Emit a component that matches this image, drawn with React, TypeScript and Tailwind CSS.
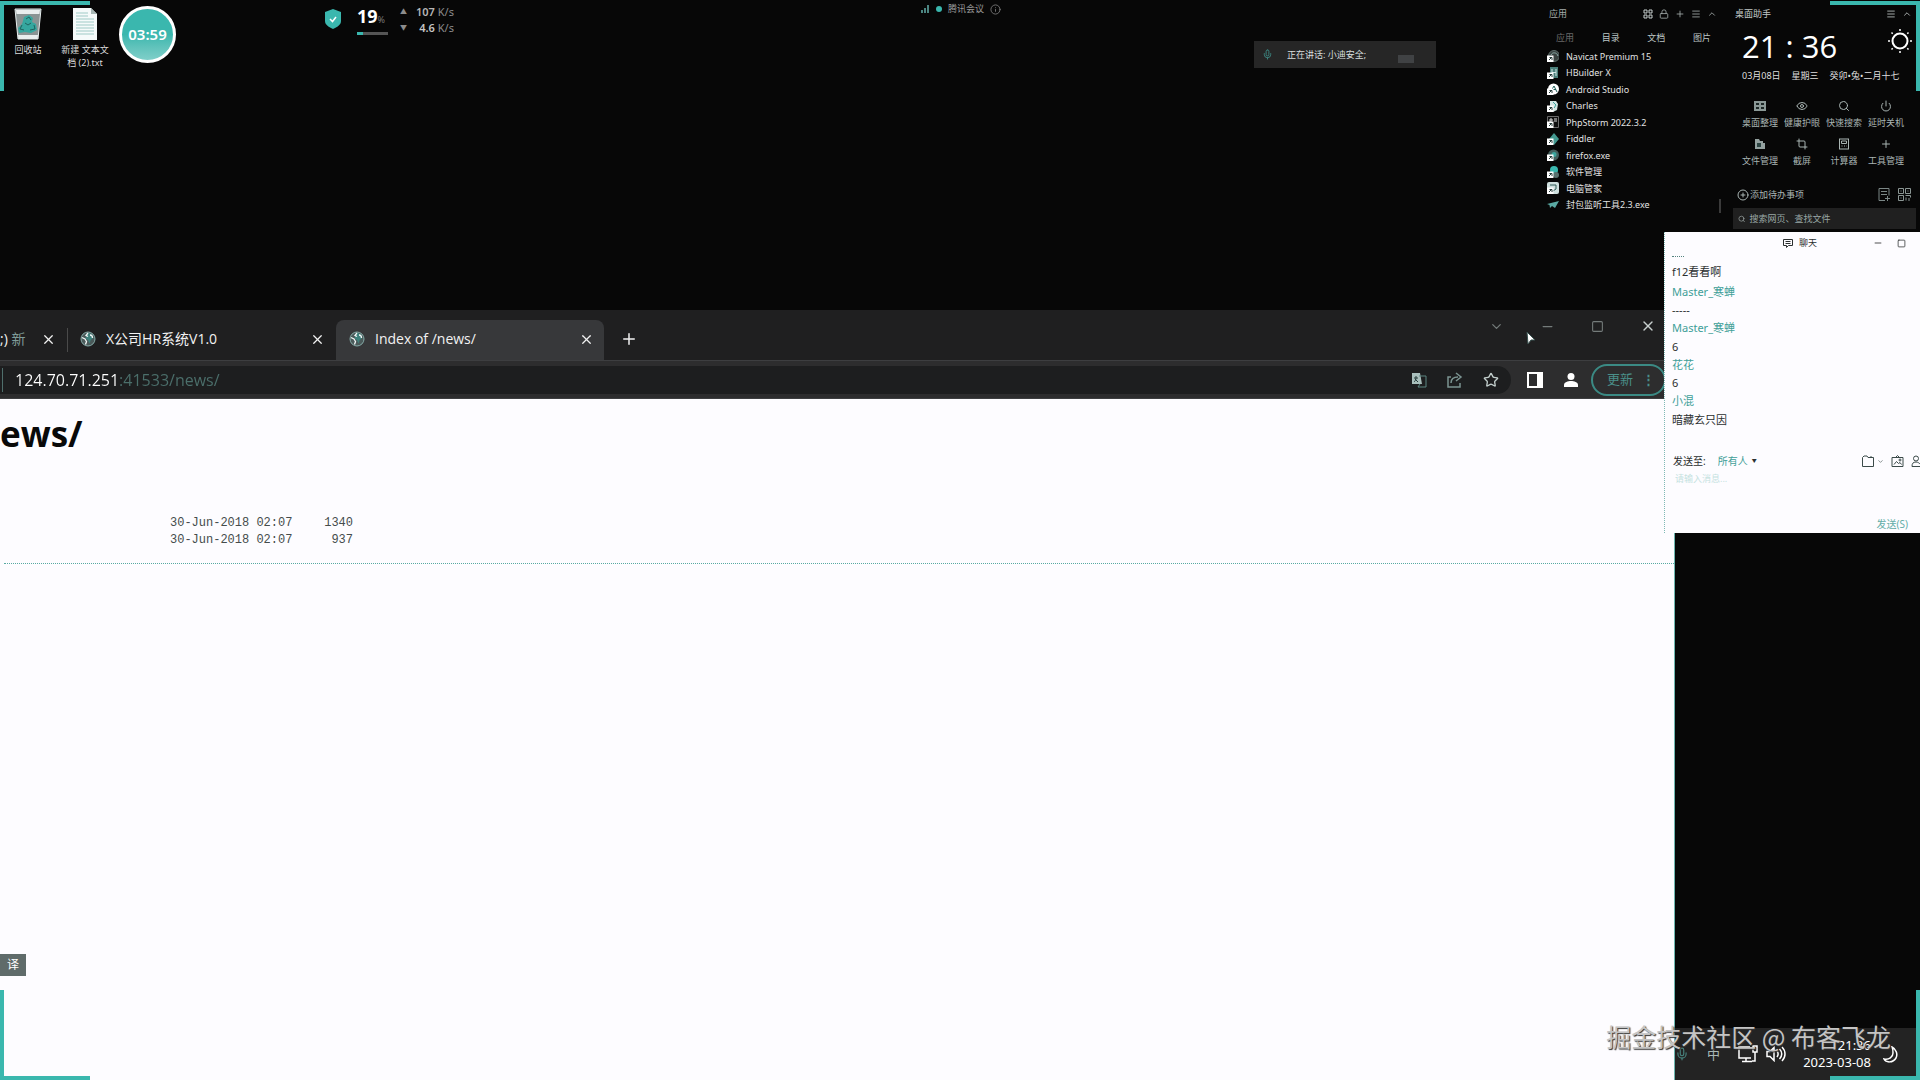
import React, { useState } from "react";
import {
  ChevronDown,
  ChevronUp,
  CirclePlus,
  Crop,
  Eye,
  Info,
  Lock,
  Menu,
  Mic,
  Minus,
  Plus,
  Power,
  Search,
  Square,
  Star,
  X,
} from "lucide-react";

interface AppItem {
  name: string;
  icon: React.ReactNode;
  shortcut: boolean;
}

const apps: AppItem[] = [
  {
    name: "Navicat Premium 15",
    icon: (
      <>
        <circle cx="7" cy="6" r="5.500" fill="#39413f" stroke="#5f6f6d" />
        <path d="M4 5c1-3 6-3 7 1" stroke="#8fb0ad" fill="none" />
      </>
    ),
    shortcut: true,
  },
  {
    name: "HBuilder X",
    icon: (
      <>
        <path d="M3 0h8v11H3z" fill="#4b7f7a" />
        <path d="M5 2v7M9 2v7M5 5.500h4" stroke="#cfe4e2" />
      </>
    ),
    shortcut: true,
  },
  {
    name: "Android Studio",
    icon: (
      <>
        <circle cx="6.500" cy="6" r="5.500" fill="#fff" />
        <path d="M4 8l3-5 3 6M5 6.500h4" stroke="#1f5d58" fill="none" />
      </>
    ),
    shortcut: true,
  },
  {
    name: "Charles",
    icon: (
      <>
        <path d="M3 1h6l2 3-1 6-4 2-3-4z" fill="#d4e6e4" />
        <path d="M6 2l3 3-2 3" stroke="#3aa49c" fill="none" />
      </>
    ),
    shortcut: true,
  },
  {
    name: "PhpStorm 2022.3.2",
    icon: (
      <>
        <path d="M.5 .5h11v11H.5z" fill="#111" stroke="#6a6a6a" />
        <path d="M3 6V3h2v2H3M7 3h3M7 5h3" stroke="#ddd" fill="none" />
      </>
    ),
    shortcut: true,
  },
  {
    name: "Fiddler",
    icon: <path d="M7 0l5 6-5 6-5-6z" fill="#449990" />,
    shortcut: true,
  },
  {
    name: "firefox.exe",
    icon: (
      <>
        <circle cx="6.500" cy="6" r="5.500" fill="#44605d" />
        <circle cx="7" cy="5.500" r="2.500" fill="#3aa49c" />
      </>
    ),
    shortcut: true,
  },
  {
    name: "软件管理",
    icon: (
      <>
        <circle cx="7" cy="4" r="4" fill="#3ab7ae" />
        <circle cx="9" cy="9" r="3" fill="#59716e" />
      </>
    ),
    shortcut: true,
  },
  {
    name: "电脑管家",
    icon: (
      <>
        <rect width="12" height="12" rx="2" fill="#cfe0de" />
        <path d="M3 3h6v4L6 9" stroke="#2f5b57" fill="none" />
      </>
    ),
    shortcut: true,
  },
  {
    name: "封包监听工具2.3.exe",
    icon: <path d="M0 5l12-3-4 7-3-2-2 2-.5-3z" fill="#5aa9a3" />,
    shortcut: false,
  },
];

const tools = [
  { name: "桌面整理", icon: <TidyIcon /> },
  { name: "健康护眼", icon: <Eye size={12} /> },
  { name: "快速搜索", icon: <Search size={12} /> },
  { name: "延时关机", icon: <Power size={12} /> },
  { name: "文件管理", icon: <FilesIcon /> },
  { name: "截屏", icon: <Crop size={12} /> },
  { name: "计算器", icon: <CalculatorIcon /> },
  { name: "工具管理", icon: <Plus size={12} /> },
];

const messages = [
  { text: "f12看看啊", name: false, height: "h-5" },
  { text: "Master_寒蝉", name: true, height: "h-5" },
  { text: "-----", name: false, height: "h-4" },
  { text: "Master_寒蝉", name: true, height: "h-5" },
  { text: "6", name: false, height: "h-[18px]" },
  { text: "花花", name: true, height: "h-[18px]" },
  { text: "6", name: false, height: "h-[18px]" },
  { text: "小混", name: true, height: "h-[18px]" },
  { text: "暗藏玄只因", name: false, height: "h-5" },
];

const files = [
  { date: "30-Jun-2018 02:07", size: "1340" },
  { date: "30-Jun-2018 02:07", size: "937" },
];

function TidyIcon() {
  return (
    <svg width="12" height="12" viewBox="0 0 12 12">
      <path d="M0 1h12v10H0z" fill="#8a9896" />
      <path d="M2 3h3v2H2zM7 3h3v2H7zM2 7h3v2H2zM7 7h3v2H7z" fill="#1b2625" />
    </svg>
  );
}

function FilesIcon() {
  return (
    <svg width="12" height="12" viewBox="0 0 12 12">
      <path d="M1 1h4l1 2h3v2h2v6H1z" fill="#93a19f" />
      <path d="M3 5h4v4H3z" fill="#2c4442" />
    </svg>
  );
}

function CalculatorIcon() {
  return (
    <svg width="12" height="12" viewBox="0 0 12 12" fill="none" stroke="currentColor">
      <rect x="1.5" y="1" width="9" height="10" />
      <path d="M3.5 3h5v2.5h-5zM3.5 8h1M6 8h1M8.5 8h0.5" />
    </svg>
  );
}

const GridIcon = () => (
  <svg width="10" height="10" viewBox="0 0 10 10" fill="none" stroke="#c8d0cf">
    <path d="M1 1h3v3H1zM6 1h3v3H6zM1 6h3v3H1zM6 6h3v3H6z" />
  </svg>
);

const QrIcon = () => (
  <svg width="13" height="13" viewBox="0 0 13 13" fill="none" stroke="#8b9694">
    <path d="M.5 .5h5v5h-5zM7.500 .5h5v5h-5zM.5 7.500h5v5h-5zM3 2.500v1M10 2.500v1M3 9.500v1M7.500 7.500h5v2M8 12.500v-3M11 10v3" />
  </svg>
);

const SunIcon = () => (
  <svg width="24" height="24" viewBox="0 0 24 24" fill="none" stroke="#fff">
    <circle cx="12" cy="12" r="7.500" strokeWidth="2" />
    <path
      d="M12 0v2M12 22v2M0 12h2M22 12h2M3.500 3.500l1.200 1.200M19.300 19.300l1.200 1.200M3.500 20.500l1.200-1.200M19.300 4.700l1.200-1.200"
      strokeWidth="1.500"
    />
  </svg>
);

const MoonIcon = () => (
  <svg width="15" height="17" viewBox="0 0 15 17" fill="none" stroke="#fff" strokeWidth="1.500">
    <path d="M9 1c4 2 6 7 4 11-3 5-10 5-12 1 5 1 9-2 9-6 0-2 0-4-1-6z" />
  </svg>
);

const GlobeIcon = () => (
  <svg width="18" height="18" viewBox="0 0 18 18" fill="none">
    <circle cx="9" cy="9" r="7" fill="#4b5a5a" stroke="#84aaa7" />
    <path d="M8 3.5c3-1.5 6 1 6.200 4.500l-2.500 2-1.200 3.500-1.500-3.500-2.500-1.500z" fill="#3d817c" />
    <path d="M3 7.500l3 1.500 1.500 2.500-1 3M9 3l-2 2.500 2 1M11 5c1.500 0 2.500 1.500 2.500 3" stroke="#f1f6f6" strokeWidth="1.300" />
  </svg>
);

const RecycleBinIcon = () => (
  <svg width="28" height="32" viewBox="0 0 28 32">
    <path d="M1 1h26l-3 30H4z" fill="#8a9494" stroke="#e6eeee" />
    <path d="M2 2h24l-.5 4H2.500zM4 27h20l-.4 4H4.400z" fill="#e9eeee" />
    <path d="M10 9l5-2 4 3-1 4 4 2 1 6-6 3-6-1-6 1-1-5 4-4 1-3z" fill="#35a79f" />
    <path d="M12 11l3-2 2 3M8 17l-2 4 4 1M20 17l1 4-5 1M11 15l3 2 3-2" stroke="#20625e" fill="none" />
  </svg>
);

const TextFileIcon = () => (
  <svg width="24" height="32" viewBox="0 0 24 32">
    <path d="M0 0h18l6 6v26H0z" fill="#f5fafa" />
    <path d="M18 0l6 6h-6z" fill="#a7b7b5" />
    <path
      d="M3 5h12M3 8h12M3 11h18M3 14h18M3 17h18M3 20h18M3 23h18M3 26h18"
      stroke="#9fcac6"
    />
  </svg>
);

const ShieldIcon = () => (
  <svg width="16" height="20" viewBox="0 0 16 20">
    <path d="M8 0l8 3v9c0 4-4 6-8 8-4-2-8-4-8-8V3z" fill="#3ab7ae" />
    <path d="M5 10l2.500 2.500L11 8" stroke="#fff" strokeWidth="1.500" fill="none" />
  </svg>
);

const Desktop = () => (
  <div className="absolute left-2 top-[6px] flex items-start text-[9px] leading-[13px] text-[#dcdcdc]">
    <button type="button" className="flex w-10 flex-col items-center gap-[3px] pt-[2px]">
      <RecycleBinIcon />
      <span>回收站</span>
    </button>
    <button type="button" className="ml-[10px] flex w-[54px] flex-col items-center gap-[3px] pt-[2px]">
      <TextFileIcon />
      <span>
        新建 文本文
        <br />档 (2).txt
      </span>
    </button>
    <div className="ml-[7px] flex h-[57px] w-[57px] items-center justify-center rounded-full border-[3px] border-white bg-linear-to-b from-[#3ab7ae] from-50% to-[#7fcfc9] text-[15px] font-semibold text-white">
      03:59
    </div>
  </div>
);

const NetworkMonitor = () => (
  <div className="absolute left-[325px] top-1 flex items-start text-[#8c8c8c]">
    <div className="pt-[5px]">
      <ShieldIcon />
    </div>
    <div className="ml-4 w-[31px]">
      <div className="flex items-baseline text-[18px] font-bold leading-6 text-white">
        19<span className="text-[9px] font-normal text-[#777]">%</span>
      </div>
      <div className="h-[3px] bg-[#555]">
        <div className="h-full w-[19%] bg-[#3ab7ae]" />
      </div>
    </div>
    <div className="ml-3 grid grid-cols-[8px_auto] gap-x-2 text-[11px] leading-4">
      <span className="text-[7px]">▲</span>
      <span className="text-right">
        <b className="font-semibold text-[#b5b5b5]">107</b> K/s
      </span>
      <span className="text-[7px]">▼</span>
      <span className="text-right">
        <b className="font-semibold text-[#c5c5c5]">4.6</b> K/s
      </span>
    </div>
  </div>
);

const MeetingBar = () => (
  <>
    <div className="absolute left-1/2 top-0 ml-[-39px] flex h-[18px] items-center gap-[6px] text-[9px] text-[#9a9a9a]">
      <svg width="9" height="8" viewBox="0 0 9 8" fill="#4b8581">
        <path d="M0 5h2v3H0zM3 3h2v5H3zM6 0h2v8H6z" />
      </svg>
      <svg width="6" height="6" viewBox="0 0 6 6">
        <circle cx="3" cy="3" r="3" fill="#3ab7ae" />
      </svg>
      <span>腾讯会议</span>
      <Info size={11} className="text-[#777]" />
    </div>
    <div className="absolute right-[484px] top-[41px] flex h-[27px] w-[182px] items-center bg-[#262626] text-[9px] text-[#d8dede]">
      <Mic size={11} className="ml-2 text-[#3d8a84]" />
      <span className="ml-[14px]">正在讲话: 小迪安全;</span>
      <span className="ml-auto mr-[22px] mt-2 h-2 w-4 bg-[#404244]" />
    </div>
  </>
);

const AppsPanel = () => {
  const [tab, setTab] = useState("应用");
  return (
    <section className="absolute right-[190px] top-[7px] w-[183px] text-[9px] text-[#e2e2e2]">
      <header className="flex h-[14px] items-center pl-[2px] text-[#a5adac]">
        <span className="mr-auto">应用</span>
        <div className="flex gap-[6px] pr-[13px]">
          <GridIcon />
          <Lock size={10} />
          <Plus size={10} />
          <Menu size={10} />
          <ChevronUp size={10} />
        </div>
      </header>
      <nav className="mt-[10px] flex h-[14px] justify-between pl-[9px] pr-[19px]">
        {["应用", "目录", "文档", "图片"].map((name) => (
          <button
            key={name}
            type="button"
            onClick={() => setTab(name)}
            className={name === tab ? "text-[#6a6a6a]" : "text-[#bcc6c5]"}
          >
            {name}
          </button>
        ))}
      </nav>
      <ul className="mt-[3px] flex h-[165px] flex-col">
        {apps.map((app) => (
          <li key={app.name} className="flex flex-1 items-center gap-[7px]">
            <svg width="12" height="12" viewBox="0 0 12 12">
              {app.icon}
              {app.shortcut && (
                <>
                  <path d="M0 5.500h6.500V12H0z" fill="#fff" />
                  <path d="M2 10l3-3M2.500 7.500H5V10" stroke="#243b39" fill="none" />
                </>
              )}
            </svg>
            {app.name}
          </li>
        ))}
      </ul>
      <span className="absolute bottom-0 right-[9px] h-[14px] w-[2px] bg-[#3a3a3a]" />
    </section>
  );
};

const AssistantPanel = () => (
  <section className="absolute right-1 top-[7px] w-[183px] text-[9px] text-[#a9b5b3]">
    <header className="flex h-[14px] items-center pl-[2px] pr-1 text-[#c2c9c8]">
      <span className="mr-auto">桌面助手</span>
      <Menu size={10} />
      <ChevronUp size={10} className="ml-[6px]" />
    </header>
    <div className="mt-[5px] flex h-10 items-center justify-between pl-[9px] pr-1 text-white">
      <time className="font-['Open_Sans'] text-[31px] leading-10">21 : 36</time>
      <div className="mb-[10px]">
        <SunIcon />
      </div>
    </div>
    <div className="mt-[3px] flex h-[14px] items-center gap-[11px] whitespace-nowrap pl-[9px] text-[#dfdfdf]">
      <span>03月08日</span>
      <span>星期三</span>
      <span>癸卯•兔•二月十七</span>
    </div>
    <div className="mt-[17px] grid grid-cols-4 gap-y-2 pl-[6px] pr-[9px]">
      {tools.map((tool) => (
        <button
          key={tool.name}
          type="button"
          className="flex flex-col items-center gap-1 whitespace-nowrap leading-[14px]"
        >
          {tool.icon}
          {tool.name}
        </button>
      ))}
    </div>
    <div className="mt-[19px] flex h-[15px] items-center pl-1 pr-[5px]">
      <button type="button" className="mr-auto flex items-center gap-px">
        <CirclePlus size={12} />
        添加待办事项
      </button>
      <svg width="12" height="13" viewBox="0 0 12 13" fill="none" stroke="#7b8786">
        <path d="M7 12.500H1v-12h10v7M3 3.500h6M3 6.500h6M7 10.500h5M9.500 8v5" />
      </svg>
      <span className="ml-2">
        <QrIcon />
      </span>
    </div>
    <label className="mt-[6px] flex h-[21px] items-center gap-1 bg-[#202020] pl-[5px]">
      <Search size={8} />
      <input
        aria-label="搜索"
        placeholder="搜索网页、查找文件"
        className="w-full bg-transparent outline-none placeholder:text-[#9aa8a6]"
      />
    </label>
  </section>
);

const BrowserWindow = () => (
  <main className="absolute bottom-0 left-0 right-[245px] top-[310px] flex flex-col overflow-hidden border-r border-[#6cb5ae] bg-[#fdfcff] font-['Open_Sans','Noto_Sans_CJK_SC',sans-serif]">
    <div className="flex h-[50px] items-end bg-[#1f1f20] text-sm text-[#f2f2f2]">
      <div className="flex h-[38px] w-[67px] items-center justify-between overflow-hidden pb-1 pr-[11px]">
        <span className="whitespace-nowrap">
          ;) <span className="text-[#7f9c99]">新</span>
        </span>
        <button type="button" aria-label="关闭标签页">
          <X size={15} />
        </button>
      </div>
      <span className="mb-2 h-6 w-px bg-[#4a4a4a]" />
      <div className="flex h-10 w-[268px] items-center pb-[2px] pl-[11px] pr-[11px]">
        <GlobeIcon />
        <span className="ml-[9px]">X公司HR系统V1.0</span>
        <button type="button" aria-label="关闭标签页" className="ml-auto">
          <X size={15} />
        </button>
      </div>
      <div className="flex h-10 w-[268px] items-center rounded-t-lg bg-[#37383a] pb-[2px] pl-3 pr-[10px]">
        <GlobeIcon />
        <span className="ml-[9px]">Index of /news/</span>
        <button type="button" aria-label="关闭标签页" className="ml-auto">
          <X size={15} />
        </button>
      </div>
      <button type="button" aria-label="新标签页" className="ml-4 flex h-10 items-center pb-[2px]">
        <Plus size={18} />
      </button>
      <div className="mb-[26px] ml-auto flex items-center gap-9 pr-[18px] text-[#747b7a]">
        <ChevronDown size={15} />
        <button type="button" aria-label="最小化">
          <Minus size={15} />
        </button>
        <button type="button" aria-label="最大化">
          <Square size={13} />
        </button>
        <button type="button" aria-label="关闭" className="text-[#c8cfce]">
          <X size={16} />
        </button>
      </div>
    </div>
    <div className="flex h-[39px] items-center border-y border-[#3d3e40] bg-[#2d2d2e] pr-2 text-[#c2cecc]">
      <div className="flex h-7 flex-1 items-center gap-5 rounded-r-full bg-[#1d1e1f] pr-3">
        <input
          aria-label="地址"
          defaultValue="124.70.71.251:41533/news/"
          className="ml-[2px] flex-1 border-l border-[#4f6f6c] bg-linear-to-r from-white from-[114px] to-[#4b6f6b] to-[115px] bg-clip-text pl-3 text-base leading-6 text-transparent outline-none"
        />
        <svg width="16" height="16" viewBox="0 0 16 16" fill="none">
          <path d="M1 1h8l2 11H1z" fill="#a9bfbc" />
          <path d="M8 4h7v11H7l2-3" stroke="#5c8682" />
          <path d="M3 6h4M5 4v2c0 2-1 3-2 4M4 7l3 3" stroke="#263c3a" />
        </svg>
        <svg width="16" height="16" viewBox="0 0 16 16" fill="none" stroke="#7b9491" strokeWidth="1.500">
          <path d="M4 5H1v10h12v-4M4 11c0-4 3-6 7-6M9 1l5 4-5 4" />
        </svg>
        <Star size={16} />
      </div>
      <button type="button" aria-label="侧边栏" className="ml-4">
        <svg width="16" height="16" viewBox="0 0 16 16">
          <path d="M0 0h16v16H0zM2 2v12h8V2z" fill="#fff" fillRule="evenodd" />
        </svg>
      </button>
      <button type="button" aria-label="用户" className="ml-5">
        <svg width="16" height="16" viewBox="0 0 16 16" fill="#fff">
          <circle cx="8" cy="4.500" r="3.500" />
          <path d="M1 15v-2c0-3 4-4 7-4s7 1 7 4v2z" />
        </svg>
      </button>
      <button
        type="button"
        className="ml-3 flex h-8 w-[75px] items-center justify-between rounded-full border-2 border-[#3b8a84] pl-[14px] pr-[9px] text-[13px] text-[#4a8f89]"
      >
        更新
        <span className="font-bold">⋮</span>
      </button>
    </div>
    <h1 className="mt-3 text-[35px] font-bold leading-[46px] text-[#090909]">ews/</h1>
    <table className="ml-[170px] mt-[58px] w-[183px] font-['Liberation_Mono',monospace] text-xs text-[#454c4c]">
      <tbody>
        {files.map((file) => (
          <tr key={file.size} className="h-[17px] leading-[17px]">
            <td className="whitespace-nowrap p-0">{file.date}</td>
            <td className="p-0 text-right">{file.size}</td>
          </tr>
        ))}
      </tbody>
    </table>
    <hr className="ml-1 mt-[14px] border-t border-dotted border-[#58aaa2]" />
    <span className="mb-[104px] mt-auto flex h-[22px] w-[26px] items-center justify-center bg-[#5f6b6a] text-xs text-white">
      译
    </span>
  </main>
);

const ChatWindow = () => (
  <section className="absolute right-0 top-[232px] flex h-[301px] w-[256px] flex-col border-l border-dotted border-[#7fb9b4] bg-[#fdfcff] text-[11px] text-[#2b2f2f]">
    <header className="flex h-[22px] items-center pl-[118px] pr-[14px] text-[9px]">
      <svg width="11" height="9" viewBox="0 0 11 9" fill="none" stroke="currentColor">
        <path d="M.5 .5h9v6h-4l-2 2v-2h-3zM2.500 2.500h5M2.500 4.500h5" />
      </svg>
      <span className="ml-[5px]">聊天</span>
      <button type="button" aria-label="最小化" className="ml-auto">
        <Minus size={10} />
      </button>
      <button type="button" aria-label="最大化" className="ml-[14px]">
        <Square size={9} />
      </button>
    </header>
    <span className="ml-[7px] mt-[2px] w-3 border-t border-dotted border-[#54837f]" />
    <ul className="mt-[5px] pl-[7px]">
      {messages.map((message, index) => (
        <li
          key={index}
          className={`flex items-center ${message.height} ${message.name ? "text-[#3f9f98]" : ""}`}
        >
          {message.text}
        </li>
      ))}
    </ul>
    <div className="mt-[21px] flex h-5 items-center pl-2 text-[10px]">
      <label htmlFor="receiver">发送至:</label>
      <select id="receiver" className="ml-3 appearance-none text-[#3f9f98]">
        <option>所有人</option>
      </select>
      <span className="ml-1 text-[5px]">▼</span>
      <div className="ml-auto flex shrink-0 items-center gap-[3px] text-[#3b4a49]">
        <svg width="12" height="12" viewBox="0 0 12 12" fill="none" stroke="currentColor">
          <path d="M2 1h3l1 1.500h5.500v9H.5v-9zM9 1v2" />
        </svg>
        <ChevronDown size={7} />
        <svg className="ml-1" width="13" height="12" viewBox="0 0 13 12" fill="none" stroke="currentColor">
          <path d="M1 2.500h11v9H1zM5 2l1.500-1.500L8 2M3 9.500l2.500-3 2 2 1.500-1 1.500 2" />
          <circle cx="9" cy="5" r="1" />
        </svg>
        <svg className="ml-1" width="9" height="12" viewBox="0 0 9 12" fill="none" stroke="currentColor">
          <circle cx="5" cy="3.500" r="2.500" />
          <path d="M9 11.500H1c0-3 1-4.500 4-4.500 2 0 3 1 4 2" />
        </svg>
      </div>
    </div>
    <textarea
      aria-label="消息"
      placeholder="请输入消息..."
      className="ml-[10px] mt-[2px] flex-1 resize-none text-[9px] leading-3 outline-none placeholder:text-[#c5e2df]"
    />
    <button type="button" className="mb-px mr-3 self-end text-[10px] text-[#63ada7]">
      发送(S)
    </button>
  </section>
);

const Taskbar = () => (
  <footer className="absolute bottom-0 right-0 flex h-[52px] w-[245px] items-center bg-[#232323] pr-[22px] text-[13px] leading-[17px] text-white">
    <Mic size={14} className="text-[#47827d]" />
    <span className="ml-[18px] text-[#a9b8b6]">中</span>
    <svg className="ml-[18px]" width="20" height="18" viewBox="0 0 20 18" fill="none" stroke="#fff" strokeWidth="1.500">
      <path d="M12 2H1v11h12M4 16.500h10M8 13v3M15 1h4v6h-4zM17 7v9h-3" />
    </svg>
    <svg className="ml-2" width="20" height="16" viewBox="0 0 20 16" fill="none" stroke="#fff" strokeWidth="1.500">
      <path d="M1 5.500h3l4-4v13l-4-4H1zM11 5c1.500 2 1.500 4 0 6M13.500 3c3 3 3 7 0 10M16 1c4 4 4 10 0 14" />
    </svg>
    <div className="ml-auto mr-3 text-right">
      <div>21:36</div>
      <div>2023-03-08</div>
    </div>
    <MoonIcon />
  </footer>
);

const FrameCorners = () => (
  <>
    <i className="absolute left-0 top-px h-[90px] w-[90px] border-l-4 border-t-4 border-[#3ab7ae]" />
    <i className="absolute right-0 top-px h-[90px] w-[90px] border-r-4 border-t-4 border-[#3ab7ae]" />
    <i className="absolute bottom-0 left-0 h-[90px] w-[90px] border-b-4 border-l-4 border-[#3ab7ae]" />
    <i className="absolute bottom-0 right-0 h-[90px] w-[90px] border-b-4 border-r-4 border-[#3ab7ae]" />
  </>
);

const App = () => {
  return (
    <div className="relative h-screen w-full overflow-hidden bg-[#070707] font-['Noto_Sans','Noto_Sans_CJK_SC',sans-serif]">
      <Desktop />
      <NetworkMonitor />
      <MeetingBar />
      <AppsPanel />
      <AssistantPanel />
      <BrowserWindow />
      <ChatWindow />
      <Taskbar />
      <svg className="absolute right-[384px] top-[332px]" width="10" height="13" viewBox="0 0 10 13">
        <path d="M1 0l8 8H5l-3 4z" fill="#fff" stroke="#38514f" />
      </svg>
      <FrameCorners />
      <div className="absolute bottom-[26px] right-[29px] whitespace-nowrap font-['Noto_Sans_CJK_SC',sans-serif] text-[25px] leading-9 text-[#c4c4c4] [text-shadow:1px_1px_1px_#333]">
        掘金技术社区 @ 布客飞龙
      </div>
    </div>
  );
};

export default App;
